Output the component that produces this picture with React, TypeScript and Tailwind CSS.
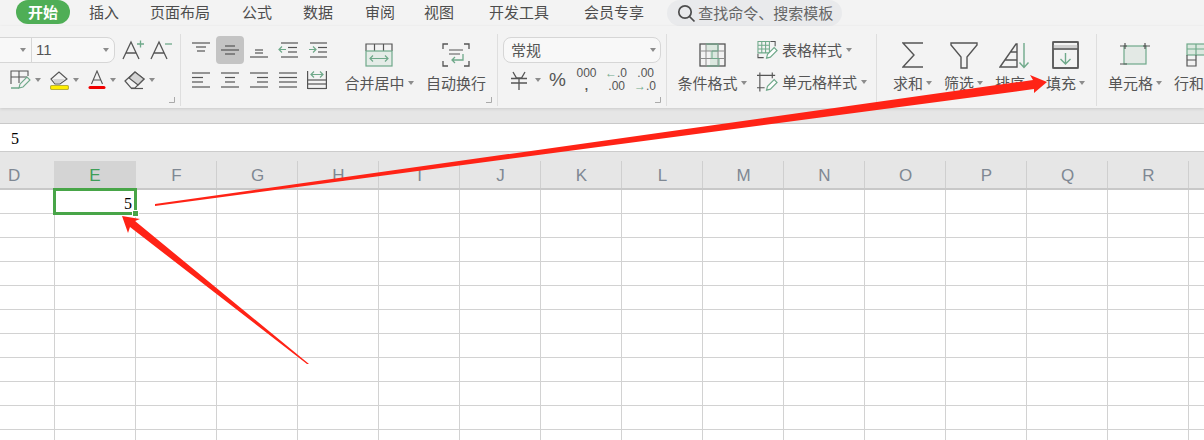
const DARK = "#555555";
const GREEN = "#6fa98a";

const columns = ["F", "G", "H", "I", "J", "K", "L", "M", "N", "O", "P", "Q", "R"];
const rows = Array.from({ length: 11 }, (_, i) => i);

function Caret() {
  return <span className="inline-block w-0 h-0 border-x-[3.5px] border-x-transparent border-t-[4px] border-t-[#8c8c8c]" />;
}

function Corner() {
  return (
    <svg width="6" height="6" className="absolute right-[5px] bottom-[3px]">
      <path d="M0 5.5H5.5V0" fill="none" stroke="#aaaaaa" />
    </svg>
  );
}

function Divider() {
  return <div className="w-px h-[72px] bg-[#dedede] shrink-0" />;
}

function Lines({ items, green, extra }: { items: number[][]; green?: string; extra?: string }) {
  return (
    <svg width="20" height="20" viewBox="0 0 20 20" fill="none" stroke={DARK} strokeWidth="1.2">
      {items.map((l, i) => (
        <path key={i} d={`M${l[0]} ${l[1]}H${l[2]}`} />
      ))}
      {extra && <path d={extra} />}
      {green && <path d={green} stroke={GREEN} />}
    </svg>
  );
}

function AlignCell({ items, green, extra, active }: { items: number[][]; green?: string; extra?: string; active?: boolean }) {
  return (
    <div className="w-[29px] flex justify-center items-center">
      <div className={`w-[28px] h-[28px] rounded flex items-center justify-center ${active ? "bg-[#c4c4c4]" : ""}`}>
        <Lines items={items} green={green} extra={extra} />
      </div>
    </div>
  );
}

function BigButton({ label, icon, width, caret = true }: { label: string; icon: React.ReactNode; width: string; caret?: boolean }) {
  return (
    <div className={`flex flex-col items-center pt-[8px] shrink-0 ${width}`}>
      <div className="h-[26px] flex items-center justify-center">{icon}</div>
      <div className="mt-[5px] h-[20px] flex items-center gap-[3px] whitespace-nowrap text-[15px] leading-[20px] text-[#555]">
        {label}
        {caret && <Caret />}
      </div>
    </div>
  );
}

function PenBadge() {
  return (
    <g fill="#ffffff" stroke={GREEN} strokeWidth="1.2">
      <path d="M10 18.5l1-4 7-7 3 3-7 7z" />
    </g>
  );
}

function Arrows() {
  return (
    <svg width="1204" height="440" className="absolute left-0 top-0 pointer-events-none">
      <polygon points="155,204 1033,80 1030,75 1047,82 1034,93 1034,89 155,206" fill="#ff2316" />
      <polygon points="309,364 135,221 140,219 122,216 128,233 130,227 307,364" fill="#ff2316" />
    </svg>
  );
}

export default function App() {
  return (
    <div className="relative w-[1204px] h-[440px] overflow-hidden bg-white font-['Noto_Sans_CJK_SC','Liberation_Sans',sans-serif]">
      {/* Tabs */}
      <div className="h-[26px] bg-[#f3f3f3] flex items-start pl-[16px] text-[15px] leading-[24px] text-[#4d4d4d] whitespace-nowrap">
        <div className="w-[54px] h-[24px] rounded-full bg-[#4fae56] text-white font-bold text-center">开始</div>
        <span className="ml-[19px]">插入</span>
        <span className="ml-[31px]">页面布局</span>
        <span className="ml-[32px]">公式</span>
        <span className="ml-[31px]">数据</span>
        <span className="ml-[32px]">审阅</span>
        <span className="ml-[29px]">视图</span>
        <span className="ml-[35px]">开发工具</span>
        <span className="ml-[35px]">会员专享</span>
        <div className="ml-[23px] w-[175px] h-[26px] rounded-full bg-[#e9eaec] flex items-center pl-[10px] gap-[2px] text-[#666]">
          <svg width="19" height="19" viewBox="0 0 19 19" fill="none" stroke="#4d4d4d" strokeWidth="1.7">
            <circle cx="8" cy="8" r="6.2" />
            <path d="M12.5 12.5L17.5 17.5" />
          </svg>
          查找命令、搜索模板
        </div>
      </div>

      {/* Ribbon */}
      <div className="h-[82px] bg-[#f3f3f3] flex items-start pt-[8px] shadow-[0_1px_3px_rgba(0,0,0,0.12)] relative text-[#555]">
        {/* Font */}
        <div className="relative w-[180px] h-[72px] shrink-0 pt-[3px]">
          <div className="flex items-center h-[26px]">
            <div className="-ml-[10px] w-[125px] h-[26px] rounded-lg border border-[#d6d6d6] bg-[#f8f8f8] flex items-center">
              <div className="w-[31px] h-full border-r border-[#d6d6d6] flex items-center justify-end pr-[5px] shrink-0 ml-[10px]">
                <Caret />
              </div>
              <span className="ml-[4px] text-[15px] text-[#555] font-['Liberation_Sans',sans-serif]">11</span>
              <span className="ml-auto mr-[5px] flex"><Caret /></span>
            </div>
            <svg width="50" height="24" viewBox="0 0 50 24" fill="none" stroke={DARK} strokeWidth="1.3" className="ml-[7px]">
              <path d="M1 21L9 4L17 21M4 15H14" />
              <path d="M15 6H22M18.5 2.5V9.5" stroke={GREEN} />
              <path d="M29 21L37 4L45 21M32 15H42" />
              <path d="M43 6H50" stroke={GREEN} />
            </svg>
          </div>
          <div className="flex items-center h-[20px] mt-[7px] pl-[10px]">
            <svg width="21" height="20" viewBox="0 0 21 20" fill="none" stroke={DARK} strokeWidth="1.1">
              <path d="M1 14V1H18V6M1 7H17M9 1V13" />
              <path d="M1 18H9" stroke={GREEN} strokeWidth="1.5" />
              <path d="M9 18l1-4 7-7 3 3-7 7z" stroke={GREEN} />
            </svg>
            <span className="ml-[4px] flex"><Caret /></span>
            <svg width="19" height="20" viewBox="0 0 19 20" fill="none" stroke={DARK} strokeWidth="1.1" className="ml-[9px]">
              <path d="M1 9L9 2L17 9L10 14H5z" />
              <path d="M3 9L15 9L10 13H5z" fill="#d4d4d4" stroke="none" />
              <rect x="0.5" y="15.5" width="18" height="4" rx="1.5" fill="#ffee00" stroke="#b8b03a" />
            </svg>
            <span className="ml-[4px] flex"><Caret /></span>
            <svg width="18" height="20" viewBox="0 0 18 20" fill="none" stroke={DARK} strokeWidth="1.1" className="ml-[9px]">
              <path d="M3.5 14L9 1L14.5 14M5.5 10H12.5" />
              <rect x="0.5" y="16" width="17" height="3" rx="1.5" fill="#f00000" stroke="none" />
            </svg>
            <span className="ml-[4px] flex"><Caret /></span>
            <svg width="21" height="20" viewBox="0 0 21 20" fill="none" stroke={DARK} strokeWidth="1.2" className="ml-[8px]">
              <path d="M1 11L11 2L20 9L11 18H7z" />
              <path d="M5 8L11 2L20 9L14 15z" fill="#d4d4d4" />
              <path d="M7 18.5H19" />
            </svg>
            <span className="ml-[4px] flex"><Caret /></span>
          </div>
          <Corner />
        </div>
        <Divider />

        {/* Alignment */}
        <div className="relative w-[316px] h-[72px] shrink-0 flex pl-[5px]">
          <div className="w-[145px] shrink-0 flex flex-col pt-[2px]">
            <div className="flex h-[28px]">
              <AlignCell items={[[1, 3, 19], [5, 7, 15], [6, 11, 14]]} />
              <AlignCell active items={[[5, 6, 15], [1, 10, 19], [5, 14, 15]]} />
              <AlignCell items={[[6, 10, 14], [6, 13, 14], [1, 17, 19]]} />
              <AlignCell items={[[3, 3, 20], [10, 7.5, 19], [10, 12, 19], [3, 17, 20]]} green="M8 9.5H1M4 6.5L1 9.5L4 12.5" />
              <AlignCell items={[[3, 3, 20], [11, 7.5, 20], [11, 12, 20], [3, 17, 20]]} green="M2 9.5H9M6 6.5L9 9.5L6 12.5" />
            </div>
            <div className="flex h-[28px] mt-[2px]">
              <AlignCell items={[[1, 3, 19], [1, 7.5, 12], [1, 12, 12], [1, 17, 19]]} />
              <AlignCell items={[[1, 3, 19], [5, 7.5, 15], [5, 12, 15], [1, 17, 19]]} />
              <AlignCell items={[[1, 3, 19], [8, 7.5, 19], [8, 12, 19], [1, 17, 19]]} />
              <AlignCell items={[[1, 3, 19], [1, 7.5, 19], [1, 12, 19], [1, 17, 19]]} />
              <AlignCell
                items={[[1, 10, 19], [1, 14, 19], [1, 18.5, 19]]}
                extra="M0.6 1V19M19.4 1V19"
                green="M4 4.5H16M7 1.5L4 4.5L7 7.5M13 1.5L16 4.5L13 7.5"
              />
            </div>
          </div>
          <div className="ml-[12px]">
            <BigButton
              label="合并居中"
              width="w-[72px]"
              icon={
                <svg width="28" height="24" viewBox="0 0 28 24" fill="none" stroke={DARK} strokeWidth="1.2">
                  <path d="M1 8V1H27V8M9.5 1V8M18.5 1V8" />
                  <rect x="1" y="8" width="26" height="15" fill="#e4ece7" stroke={GREEN} />
                  <path d="M5 15.5H23M8 12.5L5 15.5L8 18.5M20 12.5L23 15.5L20 18.5" stroke={GREEN} />
                </svg>
              }
            />
          </div>
          <div className="ml-[11px]">
            <BigButton
              label="自动换行"
              width="w-[60px]"
              caret={false}
              icon={
                <svg width="28" height="24" viewBox="0 0 28 24" fill="none" stroke={DARK} strokeWidth="1.3">
                  <path d="M6 1H1V6M22 1H27V6M6 23H1V18M22 23H27V18" />
                  <path d="M7 7H21M7 11H18" strokeWidth="1" />
                  <path d="M21 11V17H10M13 14L10 17L13 20" stroke={GREEN} />
                </svg>
              }
            />
          </div>
          <Corner />
        </div>
        <Divider />

        {/* Number */}
        <div className="relative w-[168px] h-[72px] shrink-0 pl-[5px] pt-[3px]">
          <div className="w-[158px] h-[26px] rounded-lg border border-[#d6d6d6] bg-[#f8f8f8] flex items-center pl-[7px] pr-[4px] text-[15px] text-[#555]">
            常规
            <span className="ml-auto flex"><Caret /></span>
          </div>
          <div className="flex items-center h-[20px] mt-[7px] pl-[7px] font-['Liberation_Sans',sans-serif] text-[#555]">
            <svg width="18" height="19" viewBox="0 0 18 19" fill="none" stroke={DARK} strokeWidth="1.3" className="shrink-0">
              <path d="M3 1L6.5 7H11.5L15 1M1 7.5H17M1 12H17M9 7.5V19" />
            </svg>
            <span className="ml-[7px] flex"><Caret /></span>
            <span className="ml-[8px] w-[17px] text-[19px] leading-[20px]">%</span>
            <div className="ml-[10px] w-[21px] text-[12px] leading-[13px] text-center">
              <div>000</div>
              <div className="font-bold">,</div>
            </div>
            <div className="ml-[8px] w-[20px] text-[12px] leading-[13px] text-right whitespace-nowrap">
              <div><span className="text-[#6fa98a]">←</span>.0</div>
              <div>.00</div>
            </div>
            <div className="ml-[9px] w-[20px] text-[12px] leading-[13px] text-right whitespace-nowrap">
              <div>.00</div>
              <div><span className="text-[#6fa98a]">→</span>.0</div>
            </div>
          </div>
          <Corner />
        </div>
        <Divider />

        {/* Styles */}
        <div className="w-[209px] h-[72px] shrink-0 flex pl-[9px]">
          <BigButton
            label="条件格式"
            width="w-[72px]"
            icon={
              <svg width="27" height="24" viewBox="0 0 27 24" fill="none" stroke={DARK} strokeWidth="1.3">
                <rect x="7" y="1" width="12" height="7" fill="#dbe8df" stroke="none" />
                <rect x="11" y="8" width="9" height="15" fill="#dbe8df" stroke="none" />
                <rect x="1" y="1" width="25" height="22" />
                <path d="M1 8H26M1 15.5H26M7 1V23M19 1V23" strokeWidth="1" stroke="#8d8d8d" />
                <path d="M7 1H19V8H13V15.5H20V23H8" stroke={GREEN} strokeWidth="1" />
              </svg>
            }
          />
          <div className="ml-[9px] flex flex-col pt-[6px] gap-[12px]">
            <div className="flex items-center h-[20px] gap-[4px] text-[15px] whitespace-nowrap">
              <svg width="21" height="20" viewBox="0 0 22 20" fill="none" stroke={GREEN} strokeWidth="1.1">
                <path d="M1 1H13V13H1zM1 5H13M1 9H13M5 1V13M9 1V13" />
                <path d="M14 1H19V6M1 14V18H7" stroke={DARK} />
                <PenBadge />
              </svg>
              表格样式
              <Caret />
            </div>
            <div className="flex items-center h-[20px] gap-[4px] text-[15px] whitespace-nowrap">
              <svg width="21" height="20" viewBox="0 0 22 20" fill="none" stroke={DARK} strokeWidth="1.2">
                <path d="M0 3H19M3 0V20M0 16H8M16 0V6" />
                <PenBadge />
              </svg>
              单元格样式
              <Caret />
            </div>
          </div>
        </div>
        <Divider />

        {/* Editing */}
        <div className="w-[219px] h-[72px] shrink-0 flex pl-[10px]">
          <BigButton
            label="求和"
            width="w-[51px]"
            icon={
              <svg width="22" height="26" viewBox="0 0 22 26" fill="none" stroke={DARK} strokeWidth="1.4">
                <path d="M21 1H1L12 13L1 25H21" />
              </svg>
            }
          />
          <BigButton
            label="筛选"
            width="w-[51px]"
            icon={
              <svg width="28" height="27" viewBox="0 0 28 27" fill="none" stroke={DARK} strokeWidth="1.4">
                <path d="M1 1H27V3L17 15V26H11V15L1 3z" />
              </svg>
            }
          />
          <BigButton
            label="排序"
            width="w-[51px]"
            icon={
              <svg width="32" height="27" viewBox="0 0 32 27" fill="none" stroke={DARK} strokeWidth="1.4">
                <path d="M1 25L17 2H18V25zM6 18H18M12 10H18" />
                <path d="M25 1V25M20.5 20.5L25 25.5L29.5 20.5" stroke={GREEN} />
              </svg>
            }
          />
          <BigButton
            label="填充"
            width="w-[51px]"
            icon={
              <svg width="27" height="28" viewBox="0 0 27 28" fill="none" stroke={DARK} strokeWidth="1.4">
                <rect x="1" y="1" width="25" height="26" rx="1" />
                <path d="M1 6.5H26" strokeWidth="5" stroke="#cfcfcf" />
                <path d="M1 1H26V27H1zM1 8H26" />
                <path d="M13.5 12V23M8.5 18L13.5 23L18.5 18" stroke={GREEN} />
              </svg>
            }
          />
        </div>
        <Divider />

        {/* Cells */}
        <div className="flex pl-[6px] shrink-0">
          <BigButton
            label="单元格"
            width="w-[64px]"
            icon={
              <svg width="30" height="24" viewBox="0 0 30 24" fill="none" stroke={DARK} strokeWidth="1.2">
                <rect x="4" y="3" width="22" height="18" fill="#e3e9e5" stroke={GREEN} />
                <path d="M0 3H7M23 3H30M5 0V6M25 0V6M0 21H7" />
              </svg>
            }
          />
          <div className="ml-[2px]">
            <BigButton
              label="行和列"
              width="w-[64px]"
              icon={
                <svg width="30" height="24" viewBox="0 0 30 24" fill="none" stroke={DARK} strokeWidth="1.2">
                  <rect x="1" y="1" width="28" height="11" fill="#dbe8df" stroke={GREEN} />
                  <path d="M10 1V12M20 1V12M1 6H29" stroke={GREEN} />
                  <path d="M1 12V23H10V12M1 17H10" />
                </svg>
              }
            />
          </div>
        </div>
      </div>

      {/* Grey band */}
      <div className="h-[16px] bg-[#e6e6e6] border-b border-[#c9c9c9]" />

      {/* Formula bar */}
      <div className="h-[28px] bg-white border-b border-[#cccccc] pl-[11px] pt-[2px] flex items-center text-[16px] text-black font-['Liberation_Serif',serif]">
        5
      </div>

      {/* Column headers */}
      <div className="h-[38px] bg-[#e6e6e6] border-b-2 border-[#c8c8c8] flex items-end font-['Liberation_Sans',sans-serif] text-[17px] text-[#7f8893]">
        <div className="w-[54px] h-[27px] pt-[2px] pl-[8px] flex items-center shrink-0">D</div>
        <div className="w-[82px] h-[27px] pt-[2px] bg-[#d4d4d4] flex items-center justify-center shrink-0 text-[#3f9e58]">E</div>
        {columns.map((c) => (
          <div key={c} className="w-[81px] h-[27px] pt-[2px] pl-[1px] border-r border-[#cfcfcf] flex items-center justify-center shrink-0">
            {c}
          </div>
        ))}
      </div>

      {/* Sheet */}
      <div>
        {rows.map((r) => (
          <div key={r} className="h-[24px] flex border-b border-[#d2d2d2]">
            <div className="w-[55px] border-r border-[#d2d2d2] shrink-0" />
            <div className="w-[81px] border-r border-[#d2d2d2] shrink-0 flex items-center justify-end pr-[3px] pt-[5px] text-[16px] text-black font-['Liberation_Serif',serif]">
              {r === 0 ? "5" : ""}
            </div>
            {columns.map((c) => (
              <div key={c} className="w-[81px] border-r border-[#d2d2d2] shrink-0" />
            ))}
          </div>
        ))}
      </div>

      {/* Selected cell */}
      <div className="absolute left-[53px] top-[188px] w-[84px] h-[27px] border-[3px] border-[#48a548]" />
      <div className="absolute left-[133px] top-[211px] w-[5px] h-[5px] bg-[#48a548] outline outline-1 outline-white" />

      <Arrows />
    </div>
  );
}
